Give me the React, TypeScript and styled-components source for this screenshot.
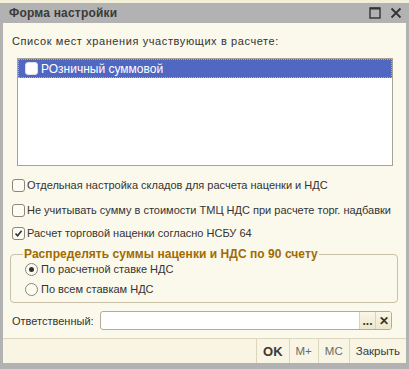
import React from "react";
import styled, { createGlobalStyle } from "styled-components";

const GlobalStyle = createGlobalStyle`
  html, body {
    margin: 0;
    padding: 0;
    background: #f4efd9;
    font-family: "Liberation Sans", Arial, sans-serif;
    font-size: 11px;
    color: #333333;
  }
`;

const Page = styled.div`
  width: 409px;
  height: 369px;
  padding-top: 3px;
  box-sizing: border-box;
`;

const Window = styled.div`
  height: 366px;
  background: #b2b2b2;
  padding: 0 3px 6px 3px;
  box-sizing: border-box;
  display: flex;
  flex-direction: column;
`;

const TitleBar = styled.div`
  height: 20px;
  display: flex;
  align-items: center;
  justify-content: space-between;
  padding: 0 4px 0 6px;
`;

const Title = styled.div`
  font-size: 12px;
  font-weight: bold;
  letter-spacing: 0.2px;
  color: #3a3a3a;
`;

const TitleButtons = styled.div`
  display: flex;
  align-items: center;
  gap: 9px;
`;

const Body = styled.div`
  flex: 1;
  background: #fbf9eb;
  display: flex;
  flex-direction: column;
`;

const Content = styled.div`
  flex: 1;
  padding: 11px 9px 0 9px;
  display: flex;
  flex-direction: column;
`;

const Caption = styled.div`
  height: 14px;
  line-height: 14px;
  letter-spacing: 0.6px;
`;

const ListBox = styled.div`
  margin: 10px 0 0 5px;
  width: 376px;
  height: 108px;
  box-sizing: border-box;
  border: 1px solid #a8a294;
  background: #ffffff;
`;

const ListRow = styled.div<{ $selected?: boolean }>`
  height: 19px;
  display: flex;
  align-items: center;
  gap: 3px;
  padding-left: 6px;
  box-sizing: border-box;
  font-size: 12px;
  background: ${(p) => (p.$selected ? "#5168c2" : "transparent")};
  color: ${(p) => (p.$selected ? "#ffffff" : "#333333")};
  border: 1px dotted ${(p) => (p.$selected ? "#c8b060" : "transparent")};
`;

const Check = styled.span<{ $white?: boolean }>`
  width: 11px;
  height: 11px;
  flex: none;
  border: 1px solid ${(p) => (p.$white ? "#e0e0e0" : "#8e8676")};
  border-radius: 3px;
  background: ${(p) => (p.$white ? "#ffffff" : "#fdfcf4")};
  display: flex;
  align-items: center;
  justify-content: center;
`;

const CheckRow = styled.label<{ $gap: number }>`
  display: flex;
  align-items: center;
  gap: 2px;
  height: 14px;
  white-space: nowrap;
  margin-top: ${(p) => p.$gap}px;
`;

const Group = styled.fieldset`
  margin: 7px 0 0 -2px;
  width: 388px;
  box-sizing: border-box;
  border: 1px solid #c8c0a8;
  border-radius: 4px;
  padding: 0 0 4px 14px;
  min-width: 0;
  height: 56px;
`;

const Legend = styled.legend`
  font-size: 12px;
  font-weight: bold;
  letter-spacing: 0.05px;
  color: #a26a00;
  padding: 0 1px;
  margin-left: -2px;
  line-height: 14px;
`;

const RadioRow = styled.label<{ $gap: number }>`
  display: flex;
  align-items: center;
  gap: 3px;
  height: 14px;
  margin-top: ${(p) => p.$gap}px;
`;

const Radio = styled.span`
  width: 11px;
  height: 11px;
  flex: none;
  border: 1px solid #8e8676;
  border-radius: 50%;
  background: #fdfcf4;
  display: flex;
  align-items: center;
  justify-content: center;
`;

const Dot = styled.span`
  width: 5px;
  height: 5px;
  border-radius: 50%;
  background: #333333;
`;

const FieldRow = styled.div`
  display: flex;
  align-items: center;
  gap: 6px;
  margin-top: 8px;
`;

const Input = styled.div`
  flex: 1;
  height: 19px;
  margin-right: 5px;
  box-sizing: border-box;
  border: 1px solid #b4ac98;
  border-radius: 3px;
  background: #ffffff;
  display: flex;
  justify-content: flex-end;
  overflow: hidden;
`;

const InputButton = styled.span`
  width: 15px;
  height: 100%;
  border-left: 1px solid #d8d2c0;
  background: linear-gradient(#faf7e8, #ece6cc);
  display: flex;
  align-items: center;
  justify-content: center;
  font-weight: bold;
  color: #333333;
  font-size: 12px;
`;

const Footer = styled.div`
  height: 24px;
  border-top: 1px solid #ddd6bc;
  display: flex;
  justify-content: flex-end;
  background: #f8f5e4;
`;

const FooterButton = styled.div<{ $bold?: boolean; $muted?: boolean }>`
  display: flex;
  align-items: center;
  padding: 0 6px 0 6px;
  border-left: 1px solid #ddd6bc;
  font-size: ${(p) => (p.$bold ? "13px" : "11.5px")};
  font-weight: ${(p) => (p.$bold ? "bold" : "normal")};
  color: ${(p) => (p.$muted ? "#6d6a60" : "#3a3a3a")};
`;

const Tick = () => (
  <svg width="9" height="9" viewBox="0 0 9 9">
    <path d="M1.5 4.5 L3.6 6.8 L7.6 1.8" fill="none" stroke="#333" strokeWidth="1.6" />
  </svg>
);

export default function App() {
  return (
    <>
      <GlobalStyle />
      <Page>
        <Window>
          <TitleBar>
            <Title>Форма настройки</Title>
            <TitleButtons>
              <svg width="12" height="12" viewBox="0 0 12 12">
                <rect x="1" y="1" width="10" height="10" fill="none" stroke="#333" strokeWidth="1.4" />
                <line x1="1" y1="1.5" x2="11" y2="1.5" stroke="#333" strokeWidth="2" />
              </svg>
              <svg width="12" height="12" viewBox="0 0 12 12">
                <path d="M1.5 1.5 L10.5 10.5 M10.5 1.5 L1.5 10.5" stroke="#333" strokeWidth="1.8" />
              </svg>
            </TitleButtons>
          </TitleBar>
          <Body>
            <Content>
              <Caption>Список мест хранения участвующих в расчете:</Caption>
              <ListBox>
                <ListRow $selected>
                  <Check $white />
                  РОзничный суммовой
                </ListRow>
              </ListBox>
              <CheckRow $gap={12}>
                <Check />
                Отдельная настройка складов для расчета наценки и НДС
              </CheckRow>
              <CheckRow $gap={11}>
                <Check />
                Не учитывать сумму в стоимости ТМЦ НДС при расчете торг. надбавки
              </CheckRow>
              <CheckRow $gap={9}>
                <Check>
                  <Tick />
                </Check>
                Расчет торговой наценки согласно НСБУ 64
              </CheckRow>
              <Group>
                <Legend>Распределять суммы наценки и НДС по 90 счету</Legend>
                <RadioRow $gap={1}>
                  <Radio>
                    <Dot />
                  </Radio>
                  По расчетной ставке НДС
                </RadioRow>
                <RadioRow $gap={6}>
                  <Radio />
                  По всем ставкам НДС
                </RadioRow>
              </Group>
              <FieldRow>
                <span>Ответственный:</span>
                <Input>
                  <InputButton>...</InputButton>
                  <InputButton>✕</InputButton>
                </Input>
              </FieldRow>
            </Content>
            <Footer>
              <FooterButton $bold>OK</FooterButton>
              <FooterButton $muted>M+</FooterButton>
              <FooterButton $muted>MC</FooterButton>
              <FooterButton>Закрыть</FooterButton>
            </Footer>
          </Body>
        </Window>
      </Page>
    </>
  );
}
